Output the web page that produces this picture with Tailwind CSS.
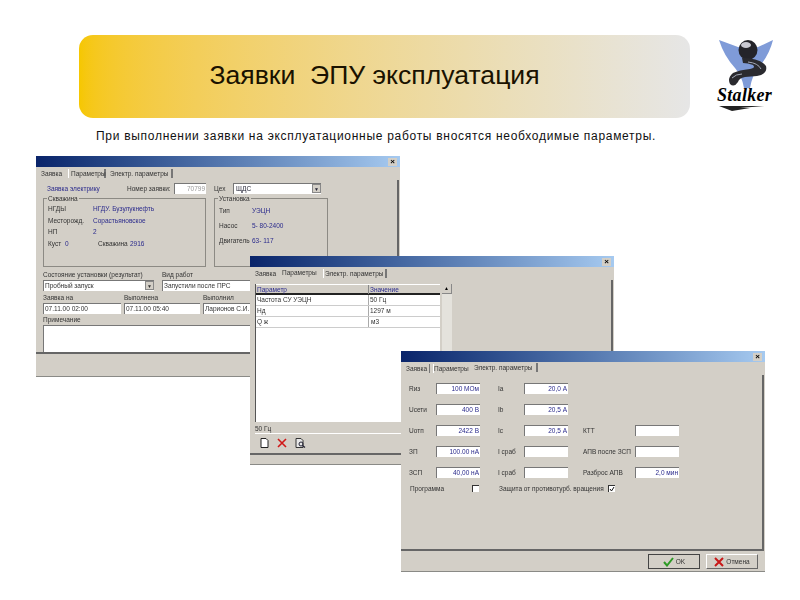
<!DOCTYPE html>
<html lang="ru">
<head>
  <meta charset="UTF-8" />
  <title>Заявки ЭПУ эксплуатация</title>
  <script src="https://cdn.jsdelivr.net/npm/@tailwindcss/browser@4"></script>
</head>
<body class="bg-white">
  <div class="relative w-[800px] h-[600px] overflow-hidden font-['Liberation_Sans',Arial,sans-serif] text-black">

    <!-- Header banner -->
    <div class="absolute left-[79px] top-[35px] w-[611px] h-[83px] rounded-[14px] bg-gradient-to-r from-[#f6c700] to-[#e6e6e6] flex items-center justify-center pr-[20px] pb-[2px]">
      <h1 class="text-[26.6px] leading-none whitespace-pre text-[#1a1200]">Заявки  ЭПУ эксплуатация</h1>
    </div>

    <!-- Logo -->
    <div class="absolute left-[714px] top-[38px] w-[62px] h-[74px]">
      <svg width="62" height="50" viewBox="0 0 62 50" class="block">
        <path d="M5 2 L24 9 Q34 11 44 9 L59 2 Q55 18 44 30 Q38 38 36 50 L30 50 Q28 38 21 30 Q10 18 5 2 Z" fill="#7f9bd8"/>
        <ellipse cx="34" cy="12" rx="9.500" ry="10" fill="#24242a"/>
        <ellipse cx="32" cy="7" rx="5" ry="3" fill="#c9c9d2"/>
        <path d="M28 20 Q46 20 52 28 Q54 36 43 38 L31 39 Q25 40 24 44 Q20 50 16 46 Q13 40 19 35 Q25 32 36 31 Q42 30 39 27 Q34 25 29 25 Z" fill="#2a2a2f"/>
        <path d="M34 24 Q44 25 47 31 M18 40 Q22 36 28 36" stroke="#a4a9b8" stroke-width="1" fill="none"/>
      </svg>
      <div class="font-['Liberation_Serif',serif] italic font-bold text-[18px] leading-[15px] tracking-[0.3px] text-black ml-[3px]">Stalker</div>
      <svg width="62" height="7" viewBox="0 0 62 7" class="block mt-[2px]">
        <path d="M5 1 L50 1 L26 3 L36 3 L18 6 Z" fill="#222"/>
      </svg>
    </div>

    <p class="absolute left-[96px] top-[129px] text-[12px] leading-[15px] tracking-[0.71px] whitespace-nowrap text-[#111]">При выполнении заявки на эксплуатационные работы вносятся необходимые параметры.</p>

    <!-- Window 1: Заявка -->
    <div class="absolute left-[36px] top-[156px] w-[364px] h-[221px] bg-[#d3cfc7] border-b border-[#8a8a86] flex flex-col text-[6.5px] leading-[9px] whitespace-nowrap text-[#333] blur-[0.25px]">
      <div class="h-[11px] shrink-0 bg-gradient-to-r from-[#0a246a] to-[#a6caf0] flex justify-end items-center pr-[3px]">
        <span class="w-[9px] h-[8px] bg-[#d3cfc7] text-black text-[8px] font-bold leading-[8px] text-center">×</span>
      </div>
      <div class="h-[13px] shrink-0 flex items-center pl-[5px] gap-[3px]">
        <span class="w-[24px]">Заявка</span>
        <span class="w-[38px] border-l border-white pl-[2px] border-r-2 border-r-[#777]">Параметры</span>
        <span class="w-[64px] pl-[1px] border-r-2 border-[#777]">Электр. параметры</span>
      </div>
      <div class="h-[174px] shrink-0 pl-[7px] pt-[3px] border-r-2 border-[#666] border-b-2 border-b-[#666] mr-[1px]">
        <div class="h-[11px] flex items-center">
          <span class="w-[84px] pl-[4px] text-[#2a2a8c]">Заявка электрику</span>
          <span class="w-[47px]">Номер заявки:</span>
          <span class="w-[32px] h-[11px] bg-white border-t border-l border-[#777] text-right pr-[1px] text-[#999]">70799</span>
          <span class="w-[19px] ml-[8px]">Цех</span>
          <span class="w-[88px] h-[11px] bg-white border-t border-l border-[#777] pl-[2px] flex justify-between text-[#223]">ЩДС<span class="w-[9px] h-[9px] bg-[#d3cfc7] border border-[#888] text-center leading-[8px] text-[5px]">▼</span></span>
        </div>
        <div class="flex gap-[8px] mt-[4px] h-[69px]">
          <div class="relative w-[163px] border border-[#8c8a84] pt-[5px] pl-[4px] flex flex-col gap-[1.500px]">
            <span class="absolute -top-[5px] left-[3px] bg-[#d3cfc7] px-[1px]">Скважина</span>
            <div class="flex h-[10px]"><span class="w-[45px]">НГДЫ</span><span class="text-[#2a2a8c]">НГДУ. Бузулукнефть</span></div>
            <div class="flex h-[10px]"><span class="w-[45px]">Месторожд.</span><span class="text-[#2a2a8c]">Сорастьяновское</span></div>
            <div class="flex h-[10px]"><span class="w-[45px]">НП</span><span class="text-[#2a2a8c]">2</span></div>
            <div class="flex h-[10px]"><span class="w-[17px]">Куст</span><span class="w-[33px] text-[#2a2a8c]">0</span><span class="w-[32px]">Скважина</span><span class="text-[#2a2a8c]">2916</span></div>
          </div>
          <div class="relative w-[114px] border border-[#8c8a84] pt-[7px] pl-[4px] flex flex-col gap-[4px]">
            <span class="absolute -top-[5px] left-[3px] bg-[#d3cfc7] px-[1px]">Установка</span>
            <div class="flex h-[11px]"><span class="w-[33px]">Тип</span><span class="text-[#2a2a8c]">УЭЦН</span></div>
            <div class="flex h-[11px]"><span class="w-[33px]">Насос</span><span class="text-[#2a2a8c]">5- 80-2400</span></div>
            <div class="flex h-[11px]"><span class="w-[33px]">Двигатель</span><span class="text-[#2a2a8c]">63- 117</span></div>
          </div>
        </div>
        <div class="flex mt-[3px] h-[9px]"><span class="w-[119px]">Состояние установки (результат)</span><span>Вид работ</span></div>
        <div class="flex gap-[8px] mt-[1px]">
          <span class="w-[111px] h-[11px] bg-white border-t border-l border-[#777] pl-[1px] flex justify-between">Пробный запуск<span class="w-[9px] h-[9px] bg-[#d3cfc7] border border-[#888] text-center leading-[8px] text-[5px]">▼</span></span>
          <span class="w-[90px] h-[11px] bg-white border-t border-l border-[#777] pl-[1px]">Запустили после ПРС</span>
        </div>
        <div class="flex mt-[2px] h-[9px]"><span class="w-[81px]">Заявка на</span><span class="w-[79px]">Выполнена</span><span>Выполнил</span></div>
        <div class="flex gap-[3px] mt-[1px]">
          <span class="w-[78px] h-[11px] bg-white border-t border-l border-[#777] pl-[1px]">07.11.00 02:00</span>
          <span class="w-[76px] h-[11px] bg-white border-t border-l border-[#777] pl-[1px]">07.11.00 05:40</span>
          <span class="w-[60px] h-[11px] bg-white border-t border-l border-[#777] pl-[1px]">Ларионов С.И.</span>
        </div>
        <div class="mt-[1px] h-[9px]">Примечание</div>
        <div class="mt-[1px] h-[27px] bg-white border-t border-l border-[#777]"></div>
      </div>
    </div>

    <!-- Window 2: Параметры -->
    <div class="absolute left-[250px] top-[256px] w-[364px] h-[209px] bg-[#d3cfc7] border-b border-[#8a8a86] flex flex-col text-[6.5px] leading-[9px] whitespace-nowrap text-[#333] blur-[0.25px]">
      <div class="h-[11px] shrink-0 bg-gradient-to-r from-[#0a246a] to-[#a6caf0] flex justify-end items-center pr-[3px]">
        <span class="w-[9px] h-[8px] bg-[#d3cfc7] text-black text-[8px] font-bold leading-[8px] text-center">×</span>
      </div>
      <div class="h-[13px] shrink-0 flex items-center pl-[5px] gap-[3px]">
        <span class="w-[24px]">Заявка</span>
        <span class="w-[38px] -mt-[2px]">Параметры</span>
        <span class="w-[64px] pl-[1px] border-l border-white border-r-2 border-r-[#777]">Электр. параметры</span>
      </div>
      <div class="h-[175px] shrink-0 pl-[5px] pt-[4px] border-r-2 border-[#666] border-b-2 border-b-[#666] mr-[1px]">
        <div class="flex gap-[2px] h-[138px]">
          <div class="w-[185px] bg-white border-l border-[#555]">
            <div class="grid grid-cols-[113px_1fr] h-[11px] bg-[#d3cfc7] border-t border-white border-b-2 border-b-[#222] text-[#2a2a8c]">
              <span class="pl-[1px] border-r border-[#888]">Параметр</span><span class="pl-[1px]">Значение</span>
            </div>
            <div class="grid grid-cols-[113px_1fr] h-[11px] border-b border-[#ccc]"><span class="pl-[1px] border-r border-[#aaa]">Частота СУ УЭЦН</span><span class="pl-[1px]">50 Гц</span></div>
            <div class="grid grid-cols-[113px_1fr] h-[11px] border-b border-[#ccc]"><span class="pl-[1px] border-r border-[#aaa]">Нд</span><span class="pl-[1px]">1297 м</span></div>
            <div class="grid grid-cols-[113px_1fr] h-[11px] border-b border-[#ccc]"><span class="pl-[1px] border-r border-[#aaa]">Q ж</span><span class="pl-[2px]">м3</span></div>
          </div>
          <div class="w-[10px] bg-[#e4e2dc] flex flex-col">
            <span class="h-[10px] bg-[#d3cfc7] border-r border-b border-[#888] text-center text-[5px] leading-[9px] text-black">▲</span>
          </div>
        </div>
        <div class="mt-[2px] h-[10px] border-b border-white">50 Гц</div>
        <div class="flex items-center gap-[8px] mt-[4px] pl-[5px]">
          <svg width="9" height="10" viewBox="0 0 9 10"><path d="M1 .5H6L8 2.5V9.5H1Z" fill="#fff" stroke="#222"/></svg>
          <svg width="10" height="10" viewBox="0 0 10 10"><path d="M1 1L9 9M9 1L1 9" stroke="#d01818" stroke-width="1.6"/></svg>
          <svg width="11" height="10" viewBox="0 0 11 10"><path d="M1 .5H6L8 2.5V9.5H1Z" fill="#e8e8e8" stroke="#333"/><circle cx="6" cy="6" r="2" fill="none" stroke="#223"/><path d="M7.5 7.5L10 9.5" stroke="#223" stroke-width="1.3"/></svg>
        </div>
      </div>
    </div>

    <!-- Window 3: Электр. параметры -->
    <div class="absolute left-[401px] top-[351px] w-[364px] h-[221px] bg-[#d3cfc7] border-b border-[#8a8a86] flex flex-col text-[6.5px] leading-[9px] whitespace-nowrap text-[#333] blur-[0.25px]">
      <div class="h-[11px] shrink-0 bg-gradient-to-r from-[#0a246a] to-[#a6caf0] flex justify-end items-center pr-[3px]">
        <span class="w-[9px] h-[8px] bg-[#d3cfc7] text-black text-[8px] font-bold leading-[8px] text-center">×</span>
      </div>
      <div class="h-[13px] shrink-0 flex items-center pl-[5px] gap-[3px]">
        <span class="w-[24px] border-r border-[#777]">Заявка</span>
        <span class="w-[38px] border-l border-white">Параметры</span>
        <span class="w-[64px] -mt-[2px] border-r-2 border-[#777]">Электр. параметры</span>
      </div>
      <div class="h-[176px] shrink-0 pt-[8px] pl-[8px] border-r-2 border-[#666] border-b-2 border-b-[#666] mr-[1px]">
        <div class="grid grid-cols-[27px_44px_18px_26px_44px_15px_52px_44px] auto-rows-[11px] gap-y-[10px] items-center">
          <span>Rиз</span><span class="h-[11px] bg-white border-t border-l border-[#777] text-right text-[#2a2a8c] pr-[1px]">100 МОм</span><span></span><span>Iа</span><span class="h-[11px] bg-white border-t border-l border-[#777] text-right text-[#2a2a8c] pr-[1px]">20,0 А</span><span></span><span></span><span></span>
          <span>Uсети</span><span class="h-[11px] bg-white border-t border-l border-[#777] text-right text-[#2a2a8c] pr-[1px]">400 В</span><span></span><span>Ib</span><span class="h-[11px] bg-white border-t border-l border-[#777] text-right text-[#2a2a8c] pr-[1px]">20,5 А</span><span></span><span></span><span></span>
          <span>Uотп</span><span class="h-[11px] bg-white border-t border-l border-[#777] text-right text-[#2a2a8c] pr-[1px]">2422 В</span><span></span><span>Ic</span><span class="h-[11px] bg-white border-t border-l border-[#777] text-right text-[#2a2a8c] pr-[1px]">20,5 А</span><span></span><span>КТТ</span><span class="h-[11px] bg-white border-t border-l border-[#777]"></span>
          <span>ЗП</span><span class="h-[11px] bg-white border-t border-l border-[#777] text-right text-[#2a2a8c] pr-[1px]">100.00 нА</span><span></span><span>I сраб</span><span class="h-[11px] bg-white border-t border-l border-[#777]"></span><span></span><span>АПВ после ЗСП</span><span class="h-[11px] bg-white border-t border-l border-[#777]"></span>
          <span>ЗСП</span><span class="h-[11px] bg-white border-t border-l border-[#777] text-right text-[#2a2a8c] pr-[1px]">40,00 нА</span><span></span><span>I сраб</span><span class="h-[11px] bg-white border-t border-l border-[#777]"></span><span></span><span>Разброс АПВ</span><span class="h-[11px] bg-white border-t border-l border-[#777] text-right text-[#2a2a8c] pr-[1px]">2,0 мин</span>
        </div>
        <div class="flex items-center mt-[6px] h-[8px]">
          <span class="w-[63px] pl-[1px]">Программа</span>
          <span class="w-[7px] h-[7px] bg-white border-t border-l border-[#333]"></span>
          <span class="w-[109px] ml-[20px]">Защита от противотурб. вращения</span>
          <span class="w-[7px] h-[7px] bg-white border-t border-l border-[#333] flex">
            <svg width="6" height="6" viewBox="0 0 6 6"><path d="M1 3L2.500 5L5 1" stroke="#111" fill="none"/></svg>
          </span>
        </div>
      </div>
      <div class="flex justify-end gap-[6px] pr-[7px] pt-[3px]">
        <span class="w-[52px] h-[15px] border border-[#444] flex items-center justify-center gap-[2px]">
          <svg width="11" height="10" viewBox="0 0 11 10"><path d="M1 5L4 8.500L10 1" stroke="#2c9a24" stroke-width="2" fill="none"/></svg>OK
        </span>
        <span class="w-[52px] h-[15px] border border-b-[#666] border-r-[#666] border-t-white border-l-white flex items-center justify-center gap-[2px]">
          <svg width="10" height="10" viewBox="0 0 10 10"><path d="M1 1L9 9M9 1L1 9" stroke="#c81818" stroke-width="2"/></svg>Отмена
        </span>
      </div>
    </div>
  </div>
</body>
</html>
